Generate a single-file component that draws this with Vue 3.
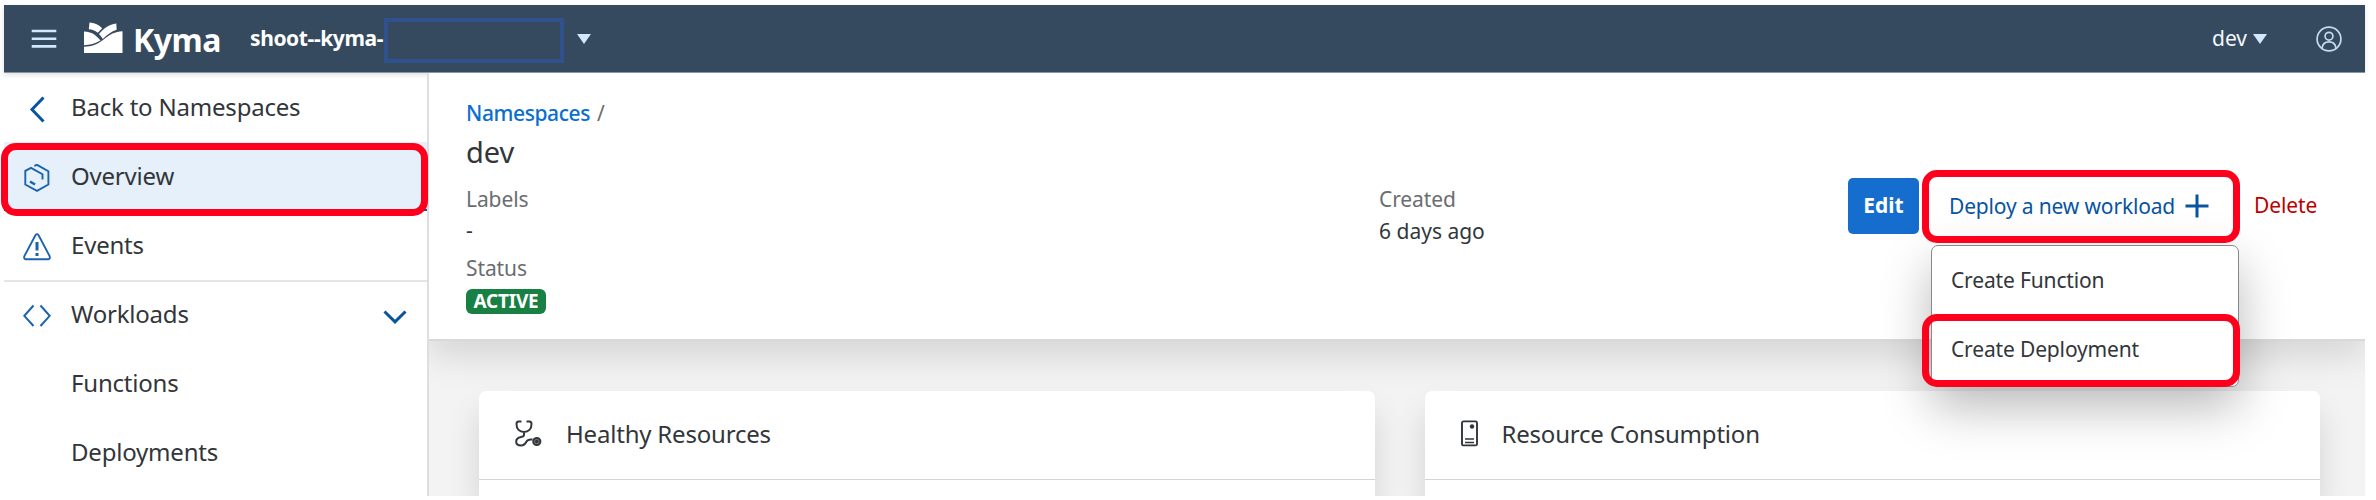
<script setup>
const childItems = ['Functions', 'Deployments']
</script>

<template>
  <div class="page">
    <header class="topbar">
      <svg class="burger" width="26" height="20" viewBox="0 0 26 20">
        <path d="M0.7 2H25.3M0.7 9.7H25.3M0.7 17.4H25.3" stroke="#d1e8ff" stroke-width="2.6" />
      </svg>
      <svg class="logo" width="40" height="32" viewBox="0 0 40 32" fill="#fff">
        <path d="M0 9.500C4 9.500 8 10.500 11.500 13.500C13.500 15 14.500 16.500 16.500 18.500C11 21.500 6 23 0 23.200Z" />
        <path d="M5.500 0.500C10 0.800 14.500 2.500 18.200 6.200L13.800 10.800C11 8.300 8 7.300 4.800 7.200Z" />
        <path d="M15 12C19.500 6.500 25 2.500 32.300 1.500L32.700 7.800C27.500 9.500 23 13 18.800 17C17.500 15 16.500 13.500 15 12Z" />
        <path d="M0 24.800C8 24.500 13 22.500 19 18C26 12.500 31 9.300 38.500 9.200V31H0Z" />
      </svg>
      <span class="brand">Kyma</span>
      <span class="cluster">shoot--kyma-</span>
      <span class="redacted"></span>
      <span class="caret cluster-caret"></span>
      <span class="ns">dev</span>
      <span class="caret ns-caret"></span>
      <svg class="avatar" width="26" height="26" viewBox="0 0 26 26" fill="none" stroke="#c3daf0" stroke-width="1.700">
        <circle cx="13" cy="13" r="11.900" />
        <circle cx="13" cy="10.200" r="3.900" />
        <path d="M6 22.300C6.500 17.500 9 15.800 13 15.800S19.500 17.500 20 22.300" />
      </svg>
    </header>

    <div class="body">
      <nav class="side">
        <div class="item">
          <svg class="icon" width="28" height="28" viewBox="0 0 28 28" fill="none" stroke="#0854a0" stroke-width="3">
            <path d="M20.500 2.500L9 14.500L20.500 26.500" />
          </svg>
          <span>Back to Namespaces</span>
        </div>
        <div class="item active">
          <svg class="icon" width="28" height="28" viewBox="0 0 28 28" fill="none" stroke="#1a63ae" stroke-width="1.900">
            <path d="M11.300 1.800L14 0.800L25.400 7.200V20.500L14 26.800L2.300 20.500V6.800L8 3.800L19.500 10.200V15.500" />
            <path d="M7 17.500L12 20.500" stroke-width="2.600" />
          </svg>
          <span>Overview</span>
          <i class="ring ring-side"></i>
        </div>
        <div class="item">
          <svg class="icon" width="28" height="28" viewBox="0 0 28 28" fill="none" stroke="#1a63ae" stroke-width="1.900">
            <path d="M12.400 2.200Q14 0 15.600 2.200L26.600 23Q27.600 26.200 24.700 26.300H3.300Q0.400 26.200 1.400 23Z" />
            <path d="M14 9V17.500M14 20V23" stroke-width="3" />
          </svg>
          <span>Events</span>
        </div>
        <div class="item group">
          <svg class="icon" width="28" height="28" viewBox="0 0 28 28" fill="none" stroke="#1a63ae" stroke-width="2">
            <path d="M10.500 3.500L1.300 13.800L10.500 24M17.500 3.500L26.700 13.800L17.500 24" />
          </svg>
          <span>Workloads</span>
          <svg class="chevron" width="24" height="14" viewBox="0 0 24 14" fill="none" stroke="#0854a0" stroke-width="3">
            <path d="M1.500 1.500L12 11.800L22.500 1.500" />
          </svg>
        </div>
        <div v-for="c in childItems" :key="c" class="item child"><span>{{ c }}</span></div>
      </nav>

      <main class="main">
        <section class="head">
          <div class="col-left">
            <div class="crumb"><a>Namespaces</a><span>/</span></div>
            <h1>dev</h1>
            <div class="label first">Labels</div>
            <div class="value">-</div>
            <div class="label status">Status</div>
            <div class="badge">ACTIVE</div>
          </div>
          <div class="col-created">
            <div class="label">Created</div>
            <div class="value">6 days ago</div>
          </div>
          <div class="actions">
            <button class="edit">Edit</button>
            <div class="deploy">
              <span>Deploy a new workload</span>
              <svg width="24" height="24" viewBox="0 0 24 24" stroke="#0854a0" stroke-width="3">
                <path d="M12 0.500V23.500M0.500 12H23.500" />
              </svg>
              <div class="menu">
                <div class="option">Create Function</div>
                <div class="option">Create Deployment<i class="ring ring-option"></i></div>
              </div>
              <i class="ring ring-deploy"></i>
            </div>
            <span class="delete">Delete</span>
          </div>
        </section>

        <section class="cards">
          <article class="card">
            <div class="card-head">
              <svg class="steth" width="27" height="27" viewBox="0 0 27 27" fill="none" stroke="#32363a" stroke-width="2">
                <path d="M6.500 1.400H3.500Q1.500 1.400 1.500 4C1.500 9 4.500 12 9 12S16.500 9 16.500 4Q16.500 1.400 14.500 1.400H11.500M9 12V15Q9 16.500 6 17C3 17.500 1.200 18.800 1.200 21.800S3 25.500 6 25.500C9.500 25.500 10.500 23.500 11.500 21.500C12.500 19.500 13.800 19 17.500 19.500" />
                <circle cx="21.800" cy="21.500" r="3.600" fill="#777a7d" />
                <circle cx="21.800" cy="21.500" r="0.800" />
              </svg>
              <h2>Healthy Resources</h2>
            </div>
          </article>
          <article class="card">
            <div class="card-head">
              <svg class="server" width="17" height="27" viewBox="0 0 17 27" fill="none" stroke="#32363a" stroke-width="1.900">
                <rect x="1" y="1.400" width="15" height="24" rx="1.500" />
                <path d="M4 19H13M4 22.500H13" stroke-width="1.700" />
                <circle cx="11" cy="6.500" r="2.200" fill="#32363a" stroke="none" />
              </svg>
              <h2>Resource Consumption</h2>
            </div>
          </article>
        </section>
      </main>
    </div>
  </div>
</template>

<style>
body { margin: 0; background: #fff; }
</style>

<style scoped>
.page {
  box-sizing: border-box;
  width: 2376px;
  height: 500px;
  padding: 5px 11px 4px 4px;
  display: flex;
  flex-direction: column;
  background: #fff;
  color: #32363a;
  font-family: "Noto Sans", "Open Sans", sans-serif;
  font-size: 21px;
  line-height: 31px;
  white-space: nowrap;
}
.topbar {
  flex: none;
  box-sizing: border-box;
  height: 68px;
  border-bottom: 1px solid #8696a3;
  background: #354a5f;
  display: flex;
  align-items: center;
  position: relative;
  z-index: 2;
  box-shadow: 0 2px 5px rgba(0, 0, 0, 0.12);
}
.burger { margin: 1px 0 0 27px; }
.logo { margin: -1px 0 0 27px; }
.brand { width: 117px; margin: 2px 0 0 9px; color: #fff; font-size: 32px; font-weight: 700; letter-spacing: -0.5px; line-height: 44px; }
.cluster { width: 133px; color: #fff; font-weight: 700; letter-spacing: -0.4px; margin-top: -1px; }
.redacted { box-sizing: border-box; width: 180px; height: 45px; border: 4px solid #2f528f; margin: 3px 0 0 1px; }
.caret { width: 0; height: 0; border: 7.500px solid transparent; border-bottom: 0; border-top: 10px solid #d1e8ff; }
.cluster-caret { margin: 1px 0 0 13px; }
.ns { margin-left: auto; width: 41px; color: #f2f6fa; }
.ns-caret { margin-top: 1px; }
.avatar { margin: 1px 23px 0 49px; }

.body { flex: 1; display: flex; min-height: 0; }
.side { flex: none; width: 423px; border-right: 2px solid #dedede; font-size: 24px; position: relative; z-index: 3; }
.item { height: 69px; box-sizing: border-box; padding: 0 0 1.500px 18.500px; display: flex; align-items: center; position: relative; letter-spacing: -0.2px; }
.icon { margin: 4px 6px 0 0; flex: none; }
.item > span { margin-left: 14.500px; }
.active { background: #e5f0fa; border-bottom: 2px solid #0854a0; padding-bottom: 0; }
.group { border-top: 2px solid #e5e5e5; padding-bottom: 4px; }
.chevron { margin: 6px 20px 0 auto; }
.child { padding-left: 52.500px; }
.ring { position: absolute; box-sizing: border-box; border: 7px solid #ff001c; border-radius: 15px; }
.ring-side { left: -3px; top: 1px; width: 427px; height: 73px; }

.main { flex: 1; min-width: 0; display: flex; flex-direction: column; background: #f3f3f3; overflow: hidden; }
.head {
  flex: none;
  box-sizing: border-box;
  height: 268px;
  border-bottom: 2px solid #d9d9d9;
  background: #fff;
  padding: 24.500px 50px 0 37px;
  display: flex;
  position: relative;
  z-index: 2;
  box-shadow: 0 14px 34px rgba(0, 0, 0, 0.13);
}
.col-left { width: 913px; }
.crumb { display: flex; color: #6a6d70; }
.crumb a { width: 131px; color: #0a6ed1; font-weight: 500; letter-spacing: -0.4px; }
h1 { margin: 3px 0 0; font-size: 29px; line-height: 40px; font-weight: 400; }
.label { color: #6a6d70; letter-spacing: -0.1px; }
.first { margin-top: 12px; }
.status { margin-top: 7px; }
.badge { box-sizing: border-box; width: 80px; height: 25px; margin: 5.500px 0 0; text-align: center; background: #188043; color: #fff; border-radius: 6px; font-size: 19px; font-weight: 700; line-height: 24px; letter-spacing: -0.2px; }
.col-created { padding-top: 86px; }
.col-created .value { margin-top: 1px; }
.actions { margin: 80px 0 0 auto; display: flex; height: 56px; line-height: 55px; }
.edit { width: 71px; height: 56px; padding: 0; border: 0; border-radius: 5px; background: #156ecd; color: #fff; font: 700 21px/55px "Noto Sans", sans-serif; }
.deploy { position: relative; display: flex; align-items: center; margin-left: 30px; width: 305px; color: #0854a0; }
.deploy > span { width: 236px; margin-top: 1px; letter-spacing: -0.16px; }
.menu { position: absolute; left: -18px; top: 67px; width: 308px; height: 142px; box-sizing: border-box; border: 1.500px solid #85898c; border-radius: 7px; background: #fff; color: #32363a; letter-spacing: -0.15px; box-shadow: 0 20px 50px rgba(0, 0, 0, 0.28); }
.option { height: 69.500px; line-height: 68px; padding-left: 19px; position: relative; }
.ring-option { left: -10px; top: -1px; width: 318px; height: 73px; }
.ring-deploy { left: -27px; top: -8px; width: 318px; height: 73px; }
.delete { color: #bb0000; width: 61px; margin-top: 0.500px; letter-spacing: -0.1px; }

.cards { flex: 1; display: flex; gap: 50px; padding: 50px 45px 0 50px; }
.card { flex: 1; background: #fff; border-radius: 7px 7px 0 0; box-shadow: 0 20px 32px rgba(0, 0, 0, 0.13); }
.card-head { box-sizing: border-box; height: 89px; border-bottom: 1.500px solid #d5d5d5; padding: 0 0 4px 36px; display: flex; align-items: center; }
h2 { margin: 0; font-size: 24px; font-weight: 400; letter-spacing: -0.2px; }
.steth { margin: 0 24px 0 0; }
.server { margin-right: 24px; }
</style>
